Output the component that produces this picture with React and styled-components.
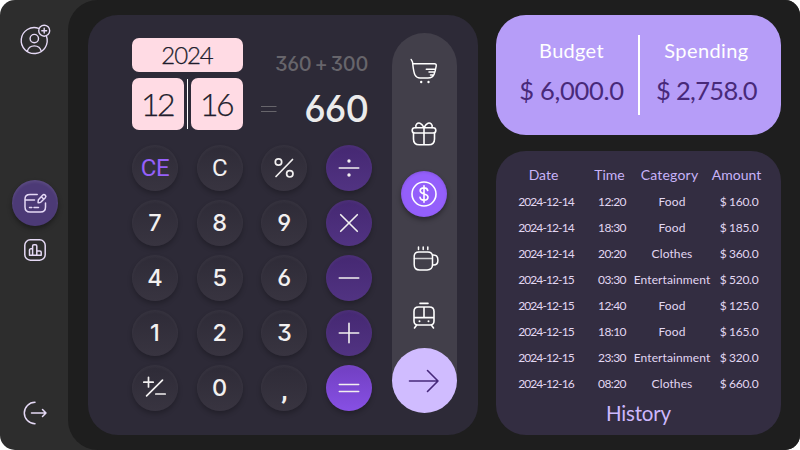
import React from "react";
import styled, { createGlobalStyle } from "styled-components";

const GlobalStyle = createGlobalStyle`
  *, *::before, *::after { box-sizing: border-box; }
  body { margin: 0; background: #fff; font-family: Lato, "Open Sans", sans-serif; }
  svg { display: block; overflow: visible; }
`;

const Shell = styled.div`
  display: flex;
  width: 800px;
  height: 450px;
  border-radius: 15px;
  overflow: hidden;
  background: #2d2d2d;
`;

const Sidebar = styled.nav`
  display: flex;
  flex-direction: column;
  align-items: center;
  width: 68px;
  padding: 19px 0 14px 2px;
  color: #e5d9f5;
`;

const NavButton = styled.div`
  display: flex;
  align-items: center;
  justify-content: center;
  width: 46px;
  height: 46px;
  margin-top: ${(p) => p.$top || 0}px;
  border-radius: 50%;
  ${(p) =>
    p.$active &&
    `background: #4c3a76;
     box-shadow: 0 3px 5px rgba(0,0,0,.35), inset 0 2px 3px rgba(255,255,255,.09);`}
`;

const Main = styled.main`
  display: flex;
  gap: 18px;
  flex: 1;
  padding: 15px 19px 15px 20px;
  border-radius: 30px 0 0 30px;
  background: #1e1e1e;
`;

const Calculator = styled.section`
  display: flex;
  gap: 20px;
  width: 390px;
  padding: 18px 21px 22px 44px;
  border-radius: 30px;
  background: #2d2a37;
`;

const CalcBody = styled.div`
  width: 240px;
  padding-top: 5px;
`;

const Readout = styled.div`
  display: flex;
  justify-content: space-between;
  height: 92px;
`;

const DateBox = styled.div`
  display: grid;
  grid-template-columns: 52px 1px 52px;
  grid-template-rows: 34px 52px;
  gap: 6px 3px;
  justify-content: space-between;
  width: 111px;
  color: #211d2c;
`;

const DateTile = styled.div`
  display: flex;
  align-items: center;
  justify-content: center;
  grid-column: ${(p) => (p.$wide ? "1 / -1" : "auto")};
  padding: ${(p) => (p.$wide ? "0 1px 1px 0" : "0 2px 1px 0")};
  border-radius: 7px;
  background: #ffdbe4;
  font-size: ${(p) => (p.$wide ? 24 : 32)}px;
  font-weight: 300;
  letter-spacing: ${(p) => (p.$wide ? -1.1 : -2.5)}px;
  -webkit-text-stroke: 0.25px #211d2c;
`;

const DateDivider = styled.div`
  height: 50px;
  margin-top: 1px;
  background: #fff;
`;

const Sums = styled.div`
  display: flex;
  flex-direction: column;
  align-items: flex-end;
  padding: 12px 4px 0 0;
  font-family: Inter, Roboto, sans-serif;
  font-feature-settings: "cv03", "cv04", "cv09";
`;

const Expression = styled.div`
  height: 28px;
  line-height: 28px;
  color: #67656b;
  font-size: 20px;
  font-weight: 450;
  letter-spacing: -0.3px;
  word-spacing: -2px;
`;

const ResultRow = styled.div`
  display: flex;
  align-items: center;
  gap: 27px;
  height: 64px;
  padding-top: 9px;
  color: #ebebeb;
  font-size: 36.5px;
  font-weight: 450;
  letter-spacing: -1px;
`;

const EqualSign = styled.svg`
  width: 16px;
  height: 8px;
`;

const Keypad = styled.div`
  display: grid;
  grid-template-columns: repeat(4, 46px);
  grid-auto-rows: 46px;
  justify-content: space-between;
  row-gap: 9px;
  margin-top: 15px;
`;

const keyFill = {
  plain: "linear-gradient(#2e2b37, #383440)",
  operator: "linear-gradient(#452872, #513382)",
  equals: "linear-gradient(#713fc1, #8750e4)",
};

const Key = styled.div`
  display: flex;
  align-items: center;
  justify-content: center;
  border-radius: 50%;
  background: ${(p) => keyFill[p.$kind]};
  box-shadow: 0 3px 5px rgba(0, 0, 0, 0.24), inset 0 2px 3px rgba(255, 255, 255, 0.04);
  color: ${(p) => (p.$accent ? "#9560fa" : "#f2f0f0")};
  font-family: ${(p) => (p.$letters ? "Roboto" : "Inter")}, sans-serif;
  font-feature-settings: "cv03", "cv04", "cv09";
  font-size: ${(p) => (p.$letters ? 24 : 23.5)}px;
  font-weight: ${(p) => (p.$letters ? 400 : 450)};
  letter-spacing: ${(p) => (p.$letters ? -0.5 : 0)}px;
  line-height: 1;
`;

const Comma = styled.span`
  padding-top: 3px;
  font-size: 26px;
  font-weight: 700;
`;

const CategoryRail = styled.div`
  display: flex;
  flex-direction: column;
  align-items: center;
  width: 65px;
  height: 380px;
  border-radius: 33px;
  background: #423f4a;
  color: #fff;
`;

const Category = styled.div`
  display: flex;
  align-items: center;
  justify-content: center;
  width: 46px;
  height: 46px;
  margin-top: ${(p) => p.$top}px;
  margin-right: 1px;
  border-radius: 50%;
  ${(p) =>
    p.$active &&
    `background: #945ffb;
     box-shadow: 0 3px 5px rgba(0,0,0,.35), inset 0 1px 3px rgba(0,0,0,.12);`}
`;

const SubmitButton = styled.div`
  display: flex;
  align-items: center;
  justify-content: center;
  width: 65px;
  height: 65px;
  margin-top: auto;
  padding-right: 1px;
  border-radius: 50%;
  background: #d0bcff;
  color: #46287a;
`;

const Side = styled.div`
  display: flex;
  flex-direction: column;
  gap: 16px;
  width: 285px;
`;

const Summary = styled.section`
  display: grid;
  grid-template-columns: 133px 2px 133px;
  align-items: center;
  height: 120px;
  padding-left: 9px;
  border-radius: 30px;
  background: #b69df8;
`;

const SummaryItem = styled.div`
  padding-bottom: 4px;
  text-align: center;
  white-space: nowrap;
`;

const SummaryLabel = styled.div`
  height: 35px;
  line-height: 34px;
  color: #fff;
  font-size: 20px;
  letter-spacing: ${(p) => p.$spacing}px;
`;

const SummaryValue = styled.div`
  height: 45px;
  line-height: 44px;
  color: #482979;
  font-size: 25.5px;
  letter-spacing: ${(p) => p.$spacing}px;
`;

const SummaryDivider = styled.div`
  height: 80px;
  background: #fff;
`;

const History = styled.section`
  height: 284px;
  padding: 9px 5px 0 14px;
  border-radius: 30px;
  background: #332d41;
`;

const HistoryRow = styled.div`
  display: grid;
  grid-template-columns: 72px 60px 60px 74px;
  height: 26px;
  color: #e2d7f2;
  font-size: 12px;
`;

const HistoryHead = styled(HistoryRow)`
  height: 28px;
  margin-left: -2.5px;
  color: #c8b3f9;
  font-size: 14px;
`;

const Cell = styled.div`
  display: flex;
  align-items: center;
  justify-content: center;
  white-space: nowrap;
  letter-spacing: ${(p) => p.$spacing || 0}px;
`;

const HistoryTitle = styled.h2`
  margin: 0;
  height: 32px;
  padding-right: 9px;
  line-height: 34px;
  color: #cdb8fd;
  font-size: 20.5px;
  font-weight: 400;
  letter-spacing: -0.2px;
  text-align: center;
`;

const Glyph = ({ w = 26, h = 26, sw = 1.6, children }) => (
  <svg
    width={w}
    height={h}
    viewBox={`0 0 ${w} ${h}`}
    fill="none"
    stroke="currentColor"
    strokeWidth={sw}
    strokeLinecap="round"
    strokeLinejoin="round"
  >
    {children}
  </svg>
);

const ProfileIcon = () => (
  <Glyph w={32} h={32} sw={1.4}>
    <path d="M19.6 2.300A13 13 0 1 0 27.500 10.300" />
    <circle cx="15.300" cy="12.600" r="4.200" />
    <path d="M8.300 25.400a7.200 7.200 0 0 1 14 0" />
    <circle cx="25.200" cy="4.700" r="5.500" />
    <path d="M25.200 2.300v4.800M22.800 4.700h4.800" />
  </Glyph>
);

const CardEditIcon = () => (
  <Glyph w={24} h={22} sw={1.5}>
    <path d="M14.2 2.500H7Q2 2.500 2 7v8q0 5 5 5h10.500q5 0 5-5v-4M2.200 8H11.500M6.500 15.500h2.300M11 15.500h4.500" />
    <path d="m15.400 7.700 4.200-4.500a1.800 1.800 0 0 1 2.700 2.500L18 10q-1 .9-2.900.8 0-1.900.3-3.100ZM18.300 4.700l2.600 2.500" />
  </Glyph>
);

const ChartIcon = () => (
  <Glyph w={24} h={24} sw={1.5}>
    <rect x="1.800" y="1.800" width="20.400" height="20.400" rx="5.500" />
    <path d="M9.600 17.200V8a1.300 1.300 0 0 1 1.300-1.300h1.600A1.300 1.300 0 0 1 13.800 8v9.200M9.600 10.800H7.800a1.300 1.300 0 0 0-1.300 1.300v5.100h11.700v-3a1.300 1.300 0 0 0-1.300-1.300h-3.100" />
  </Glyph>
);

const LogoutIcon = () => (
  <Glyph w={26} h={26} sw={1.5}>
    <path d="M13 2.300a10.700 10.700 0 0 0 0 21.400M9.500 13H24M20.500 9.500 24 13l-3.500 3.500" />
  </Glyph>
);

const CartIcon = () => (
  <Glyph w={28} h={26} sw={1.5}>
    <path d="M1.200 1.500 2.500 4c.4 3 .9 10 2.500 13 1.200 2.200 3 3 5 3h8q4.500 0 6-3.500c1-2.500 1.800-6 2.200-8.500.3-1.500-.5-2.200-1.800-2.200H2.900M16.300 11.200h8.700M19 14h5.500M20.500 17h2.800" />
    <circle cx="11.200" cy="24" r="1.200" fill="currentColor" stroke="none" />
    <circle cx="18.500" cy="24" r="1.200" fill="currentColor" stroke="none" />
  </Glyph>
);

const GiftIcon = () => (
  <Glyph>
    <rect x="1.200" y="6.700" width="23.600" height="5.300" rx="2.600" />
    <path d="M2.500 12v6q0 5.800 5.800 5.800h9.400q5.800 0 5.800-5.800v-6M13 6.700v17.100M5 6.500C4 3.500 6.500 1.500 9 2.200c2 .6 3 2.500 4 4.300 1-1.800 2-3.700 4-4.300 2.500-.7 5 1.300 4 4.300" />
  </Glyph>
);

const DollarIcon = () => (
  <Glyph>
    <circle cx="13" cy="13" r="12" />
    <path d="M13 4.800v16.400M16.700 9.500c-.3-1.700-1.700-2.600-3.700-2.600-2.300 0-3.800 1.100-3.800 2.900 0 4 7.800 2.200 7.800 6.200 0 1.900-1.600 3.100-4 3.100-2.300 0-3.800-1.100-4-2.900" />
  </Glyph>
);

const MugIcon = () => (
  <Glyph w={22} h={26} sw={1.5}>
    <path d="M5.500 1v2.600M10.200 1v2.600M14.800 1v2.600" />
    <path d="M5.800 6h9q4.700 0 4.700 4.600v8q0 5.400-5.400 5.400H6.500q-5.300 0-5.300-5.400v-8Q1.200 6 5.800 6ZM19.500 9h1c2.800 0 4.400 2.200 4.400 5.200s-1.800 4.800-4.400 4.800h-1" />
    <path d="M1.500 12.500h17.800" opacity=".75" />
  </Glyph>
);

const TramIcon = () => (
  <Glyph w={24} h={28} sw={1.600}>
    <path d="M8 1.400h8M6.500 5h11q4.500 0 4.500 4.500V19q0 4-4 4H6q-4 0-4-4V9.500Q2 5 6.500 5ZM2 15.600h20M12 5v10.600M4.500 23.300 2.500 26M19.500 23.300l2 2.700" />
    <circle cx="7.500" cy="19.300" r="1" fill="currentColor" stroke="none" />
    <circle cx="16.500" cy="19.300" r="1" fill="currentColor" stroke="none" />
  </Glyph>
);

const ArrowIcon = () => (
  <Glyph w={32} h={22} sw={1.6}>
    <path d="M1.500 11h28.500M19.500 .5 30 11 19.500 21.500" />
  </Glyph>
);

const PercentIcon = () => (
  <Glyph w={22} h={22} sw={1.7}>
    <circle cx="5.500" cy="5" r="3.200" />
    <circle cx="16.800" cy="16.800" r="3.200" />
    <path d="M19.500 2.500 3 19.500" />
  </Glyph>
);

const DivideIcon = () => (
  <Glyph w={24} h={24} sw={1.6}>
    <path d="M2.300 12h19.400" />
    <circle cx="12" cy="5" r="1.700" fill="currentColor" stroke="none" />
    <circle cx="12" cy="19" r="1.700" fill="currentColor" stroke="none" />
  </Glyph>
);

const TimesIcon = () => (
  <Glyph w={24} h={24}>
    <path d="m3.700 3.700 16.600 16.600M20.300 3.700 3.700 20.300" />
  </Glyph>
);

const MinusIcon = () => (
  <Glyph w={24} h={24}>
    <path d="M2.300 12h19.400" />
  </Glyph>
);

const PlusIcon = () => (
  <Glyph w={24} h={24}>
    <path d="M2.300 12h19.400M12 2.300v19.400" />
  </Glyph>
);

const EqualsIcon = () => (
  <Glyph w={24} h={24} sw={1.5}>
    <path d="M2.300 8.500h19.400M2.300 15.500h19.400" />
  </Glyph>
);

const SignIcon = () => (
  <Glyph w={26} h={26} sw={1.7}>
    <path d="M1.800 7.200h9.400M6.500 2.300v9.600M20.500 5.200 4.600 20.800M13.800 19h9.400" />
  </Glyph>
);

const keys = [
  { label: "CE", letters: true, accent: true },
  { label: "C", letters: true },
  { label: <PercentIcon /> },
  { label: <DivideIcon />, kind: "operator" },
  { label: "7" },
  { label: "8" },
  { label: "9" },
  { label: <TimesIcon />, kind: "operator" },
  { label: "4" },
  { label: "5" },
  { label: "6" },
  { label: <MinusIcon />, kind: "operator" },
  { label: "1" },
  { label: "2" },
  { label: "3" },
  { label: <PlusIcon />, kind: "operator" },
  { label: <SignIcon /> },
  { label: "0" },
  { label: <Comma>,</Comma>, letters: true },
  { label: <EqualsIcon />, kind: "equals" },
];

const history = [
  ["2024-12-14", "12:20", "Food", "$ 160.0"],
  ["2024-12-14", "18:30", "Food", "$ 185.0"],
  ["2024-12-14", "20:20", "Clothes", "$ 360.0"],
  ["2024-12-15", "03:30", "Entertainment", "$ 520.0"],
  ["2024-12-15", "12:40", "Food", "$ 125.0"],
  ["2024-12-15", "18:10", "Food", "$ 165.0"],
  ["2024-12-15", "23:30", "Entertainment", "$ 320.0"],
  ["2024-12-16", "08:20", "Clothes", "$ 660.0"],
];

export default function App() {
  return (
    <Shell>
      <GlobalStyle />
      <Sidebar>
        <NavButton><ProfileIcon /></NavButton>
        <NavButton $top={115} $active><CardEditIcon /></NavButton>
        <NavButton $top={2}><ChartIcon /></NavButton>
        <NavButton $top={117}><LogoutIcon /></NavButton>
      </Sidebar>
      <Main>
        <Calculator>
          <CalcBody>
            <Readout>
              <DateBox>
                <DateTile $wide>2024</DateTile>
                <DateTile>12</DateTile>
                <DateDivider />
                <DateTile>16</DateTile>
              </DateBox>
              <Sums>
                <Expression>360 + 300</Expression>
                <ResultRow>
                  <EqualSign viewBox="0 0 16 8">
                    <path d="M0 1.500h15.500M0 6.500h15.500" stroke="#67656b" strokeWidth="1.200" />
                  </EqualSign>
                  660
                </ResultRow>
              </Sums>
            </Readout>
            <Keypad>
              {keys.map((k, i) => (
                <Key key={i} $kind={k.kind || "plain"} $letters={k.letters} $accent={k.accent}>
                  {k.label}
                </Key>
              ))}
            </Keypad>
          </CalcBody>
          <CategoryRail>
            <Category $top={15}><CartIcon /></Category>
            <Category $top={17}><GiftIcon /></Category>
            <Category $top={14} $active><DollarIcon /></Category>
            <Category $top={19}><MugIcon /></Category>
            <Category $top={11}><TramIcon /></Category>
            <SubmitButton><ArrowIcon /></SubmitButton>
          </CategoryRail>
        </Calculator>
        <Side>
          <Summary>
            <SummaryItem>
              <SummaryLabel $spacing={0.3}>Budget</SummaryLabel>
              <SummaryValue $spacing={-0.3}>$ 6,000.0</SummaryValue>
            </SummaryItem>
            <SummaryDivider />
            <SummaryItem>
              <SummaryLabel $spacing={0.4}>Spending</SummaryLabel>
              <SummaryValue $spacing={-0.7}>$ 2,758.0</SummaryValue>
            </SummaryItem>
          </Summary>
          <History>
            <HistoryHead>
              <Cell>Date</Cell>
              <Cell>Time</Cell>
              <Cell $spacing={0.2}>Category</Cell>
              <Cell>Amount</Cell>
            </HistoryHead>
            {history.map(([date, time, category, amount], i) => (
              <HistoryRow key={i}>
                <Cell $spacing={-0.9}>{date}</Cell>
                <Cell $spacing={-0.6}>{time}</Cell>
                <Cell $spacing={0.1}>{category}</Cell>
                <Cell $spacing={-0.3}>{amount}</Cell>
              </HistoryRow>
            ))}
            <HistoryTitle>History</HistoryTitle>
          </History>
        </Side>
      </Main>
    </Shell>
  );
}
